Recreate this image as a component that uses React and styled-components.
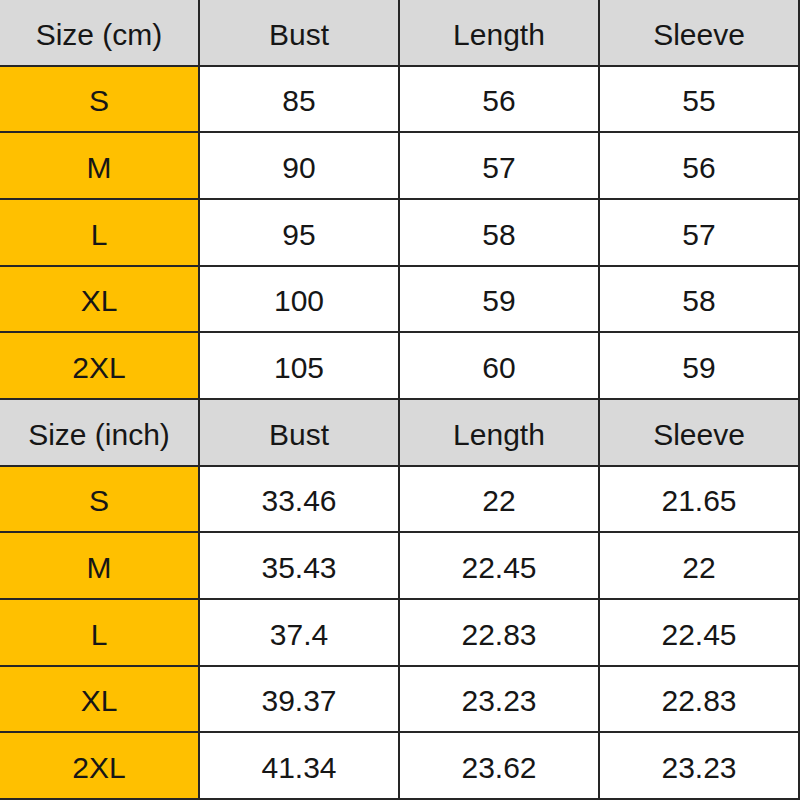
import React from 'react';
import styled, { createGlobalStyle } from 'styled-components';

const GlobalStyle = createGlobalStyle`
    html, body {
        margin: 0;
        padding: 0;
        background: #ffffff;
    }
`;

const Table = styled.div`
    width: 800px;
    height: 800px;
    display: grid;
    grid-template-columns: repeat(4, 1fr);
    grid-template-rows: repeat(12, 1fr);
    font-family: 'Liberation Sans', Arial, sans-serif;
`;

const Cell = styled.div`
    box-sizing: border-box;
    display: flex;
    align-items: center;
    justify-content: center;
    border-right: 2px solid #262626;
    border-bottom: 2px solid #262626;
    font-size: 30px;
    color: #161616;
    padding-top: 5px;
    background: ${(p) =>
        p.$kind === 'head' ? '#d9d9d9' : p.$kind === 'size' ? '#ffc000' : '#ffffff'};
`;

const cm = {
    title: 'Size (cm)',
    rows: [
        ['S', '85', '56', '55'],
        ['M', '90', '57', '56'],
        ['L', '95', '58', '57'],
        ['XL', '100', '59', '58'],
        ['2XL', '105', '60', '59'],
    ],
};

const inch = {
    title: 'Size (inch)',
    rows: [
        ['S', '33.46', '22', '21.65'],
        ['M', '35.43', '22.45', '22'],
        ['L', '37.4', '22.83', '22.45'],
        ['XL', '39.37', '23.23', '22.83'],
        ['2XL', '41.34', '23.62', '23.23'],
    ],
};

function Section({ data }) {
    return (
        <>
            {[data.title, 'Bust', 'Length', 'Sleeve'].map((h) => (
                <Cell key={h} $kind='head'>
                    {h}
                </Cell>
            ))}
            {data.rows.map((row) =>
                row.map((v, i) => (
                    <Cell key={row[0] + i} $kind={i === 0 ? 'size' : 'value'}>
                        {v}
                    </Cell>
                ))
            )}
        </>
    );
}

export default function App() {
    return (
        <>
            <GlobalStyle />
            <Table>
                <Section data={cm} />
                <Section data={inch} />
            </Table>
        </>
    );
}
